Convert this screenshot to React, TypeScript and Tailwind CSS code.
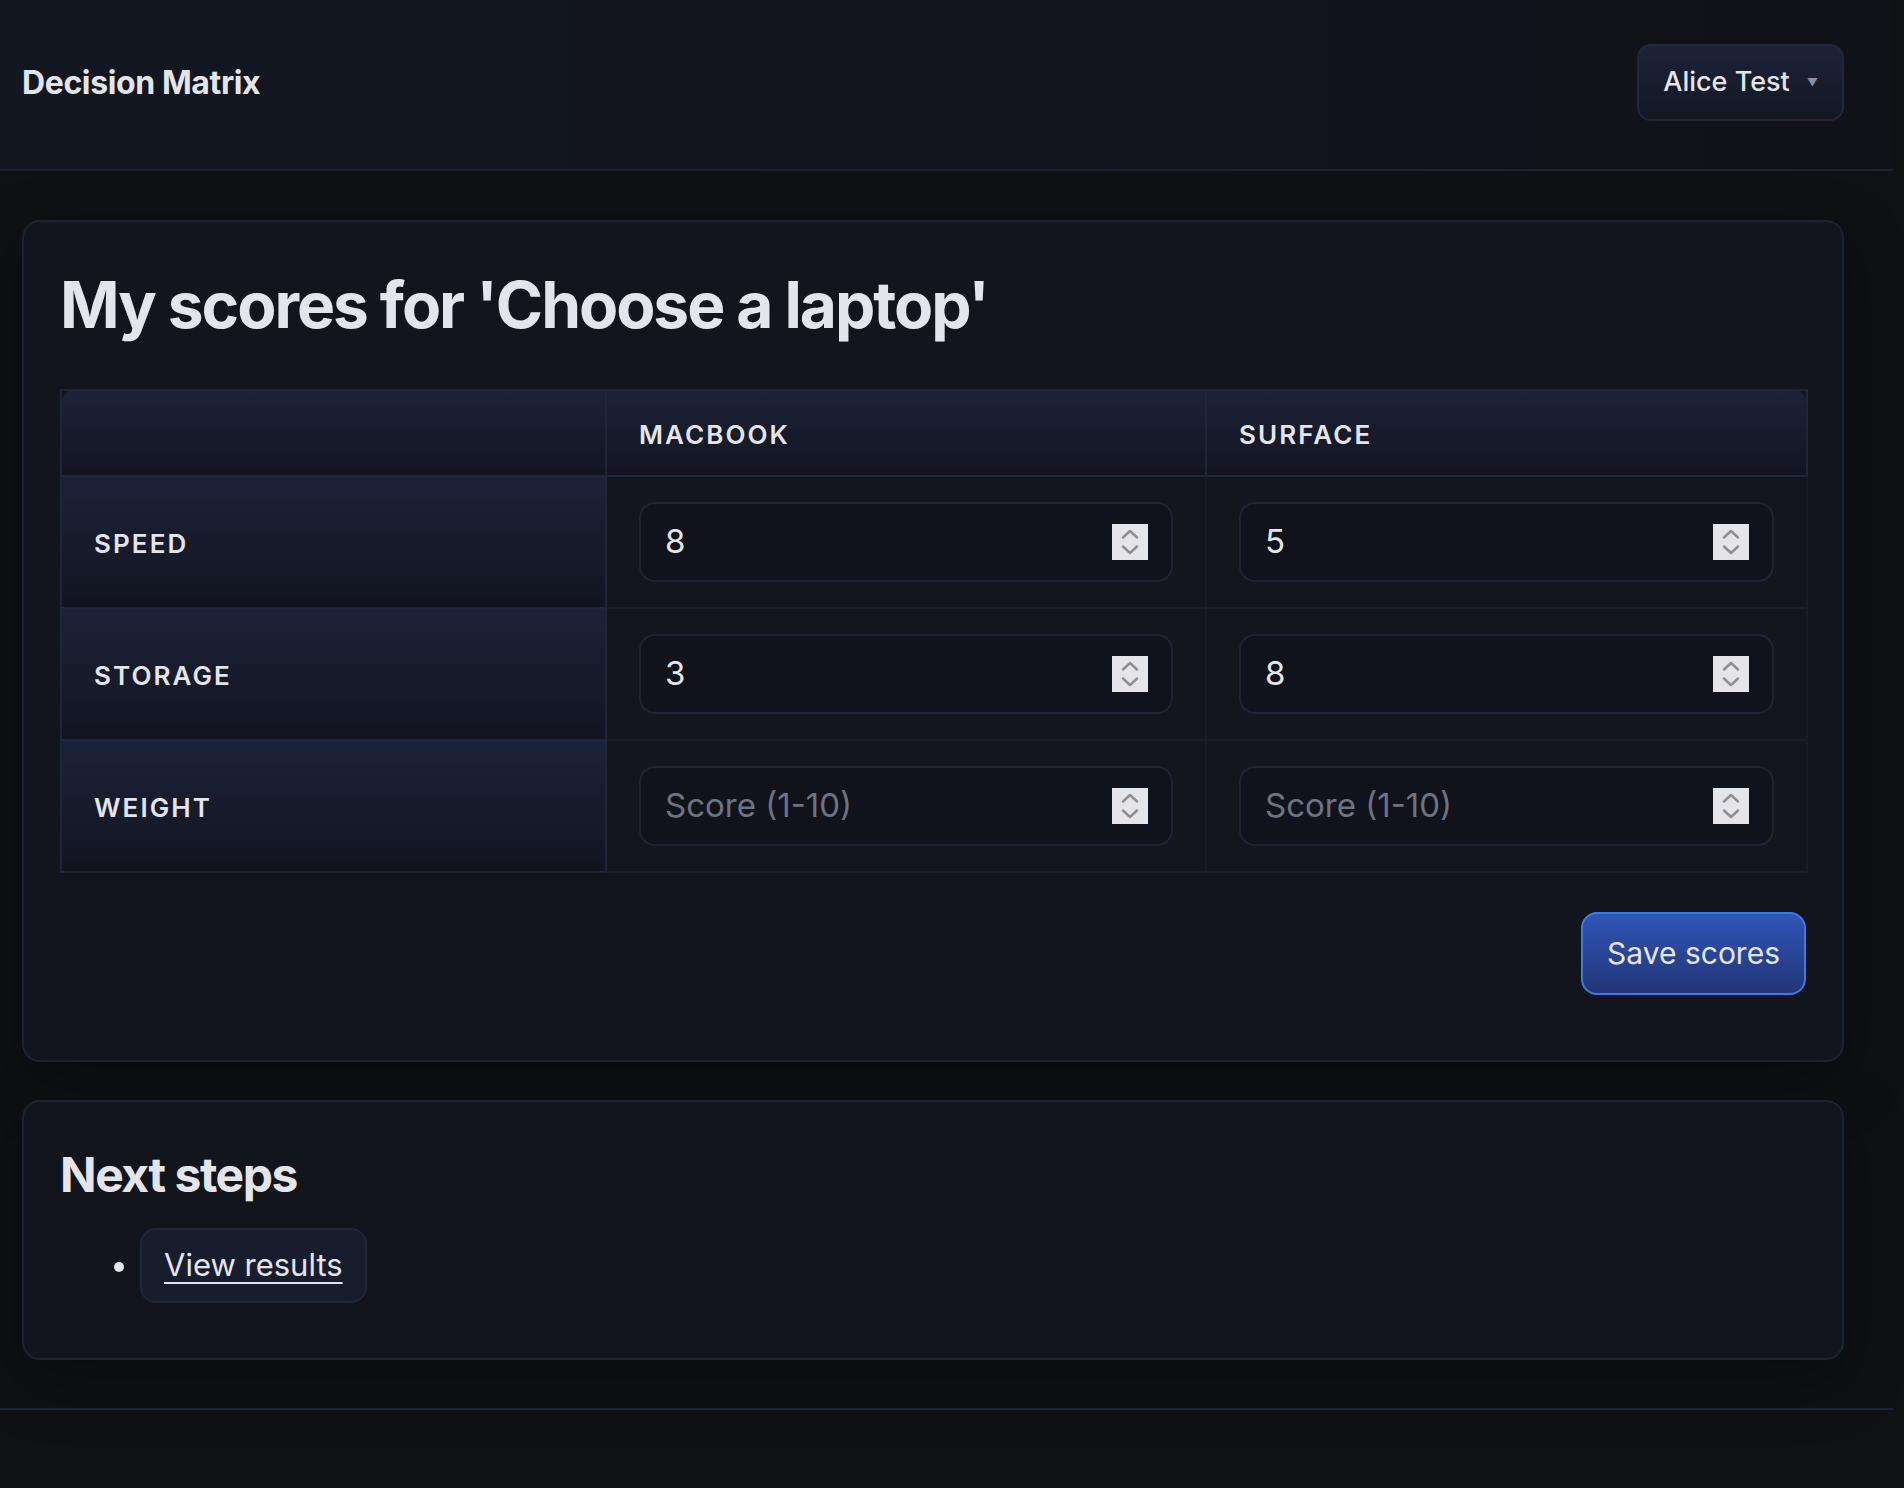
import { useState } from "react";

const options = ["MacBook", "Surface"];

const criteria = [
  { name: "Speed", scores: ["8", "5"] },
  { name: "Storage", scores: ["3", "8"] },
  { name: "Weight", scores: ["", ""] },
];

// petit spinner clair comme celui du navigateur
function Spinner() {
  return (
    <svg width="36" height="36" viewBox="0 0 36 36" className="shrink-0">
      <rect width="36" height="36" fill="#e4e4e9" />
      <path
        d="M11 13.5 L18 7 L25 13.5"
        stroke="#8e8e96"
        strokeWidth="2.5"
        fill="none"
        strokeLinecap="round"
        strokeLinejoin="round"
      />
      <path
        d="M11 22.5 L18 29 L25 22.5"
        stroke="#8e8e96"
        strokeWidth="2.5"
        fill="none"
        strokeLinecap="round"
        strokeLinejoin="round"
      />
    </svg>
  );
}

function ScoreInput({ value }: { value: string }) {
  const [v, setV] = useState(value);
  return (
    <div className="flex h-[80px] items-center rounded-[16px] border-2 border-[#1f2433] bg-[#10131b] pl-[24px] pr-[23px]">
      <input
        type="text"
        inputMode="numeric"
        value={v}
        onChange={(e) => setV(e.target.value)}
        placeholder="Score (1-10)"
        className="min-w-0 flex-1 bg-transparent text-[33px] text-[#e4e5ea] outline-none placeholder:text-[#6e7382]"
      />
      <Spinner />
    </div>
  );
}

export default function App() {
  return (
    <div className="min-h-[1488px] bg-[#0f1115] font-[Inter,sans-serif] text-[#e4e5ea]">
      <div className="w-[1893px]">
        {/* Barre du haut */}
        <header className="flex h-[171px] items-center justify-between border-b-2 border-[#1d2230] bg-gradient-to-r from-[#131722] to-[#101217] pb-[4px] pl-[22px] pr-[49px]">
          <span className="text-[32px] font-bold tracking-[-0.012em]">Decision Matrix</span>
          <button className="flex h-[77px] items-center gap-[17px] rounded-[14px] border-2 border-[#222838] bg-gradient-to-b from-[#1c2239] to-[#141824] pl-[24px] pr-[24px] text-[27px] font-medium">
            Alice Test
            <span className="text-[11px] text-[#8b90a0]">▼</span>
          </button>
        </header>

        <main className="pl-[22px] pr-[49px] pt-[49px]">
          {/* Scores */}
          <section className="rounded-[18px] border-2 border-[#1e2331] bg-[#12151c] px-[36px] pb-[65px] pt-[45px] shadow-[0_20px_60px_rgba(0,0,0,0.35)]">
            <h1 className="mb-[45px] text-[64px] font-bold leading-[1.2] tracking-[-0.032em]">
              My scores for 'Choose a laptop'
            </h1>

            <table className="w-[1746px] table-fixed border-collapse border-2 border-[#1f2534]">
              <colgroup>
                <col className="w-[545px]" />
                <col className="w-[600px]" />
                <col className="w-[601px]" />
              </colgroup>
              <thead>
                <tr className="h-[86px] bg-gradient-to-b from-[#1c2239] to-[#121520]">
                  <th className="rounded-tl-[14px] border-b-2 border-r-2 border-[#20263a]"></th>
                  {options.map((o, i) => (
                    <th
                      key={o}
                      className={
                        "border-b-2 border-r-2 border-[#20263a] px-[32px] pt-[4px] text-left text-[26px] font-semibold uppercase tracking-[0.08em]" +
                        (i === options.length - 1 ? " rounded-tr-[14px]" : "")
                      }
                    >
                      {o}
                    </th>
                  ))}
                </tr>
              </thead>
              <tbody>
                {criteria.map((c) => (
                  <tr key={c.name} className="border-b-2 border-[#1a1e29]">
                    <th className="border-b-2 border-r-2 border-[#20263a] bg-gradient-to-b from-[#1c2239] to-[#121520] px-[32px] pt-[4px] text-left text-[26px] font-semibold uppercase tracking-[0.08em]">
                      {c.name}
                    </th>
                    {c.scores.map((s, i) => (
                      <td
                        key={i}
                        className="border-r-2 border-[#181c26] bg-[#13161d] px-[32px] py-[25px]"
                      >
                        <ScoreInput value={s} />
                      </td>
                    ))}
                  </tr>
                ))}
              </tbody>
            </table>

            <div className="mt-[39px] flex justify-end">
              <button className="h-[83px] rounded-[16px] border-2 border-[#3b7be8] bg-gradient-to-b from-[#2f55b9] to-[#233676] px-[24px] text-[30px]">
                Save scores
              </button>
            </div>
          </section>

          {/* Étapes suivantes */}
          <section className="mt-[38px] rounded-[18px] border-2 border-[#1e2331] bg-[#12151c] px-[36px] pb-[55px] pt-[44px] shadow-[0_20px_60px_rgba(0,0,0,0.35)]">
            <h2 className="text-[48px] font-bold leading-[1.2] tracking-[-0.03em]">Next steps</h2>
            <ul className="mt-[25px] list-disc pl-[80px] text-[30px]">
              <li>
                <a
                  href="#"
                  className="inline-block rounded-[16px] border-2 border-[#212738] bg-[#181d2e] px-[22px] py-[13px] text-[31px] leading-[1.45] underline decoration-2 underline-offset-[6px]"
                >
                  View results
                </a>
              </li>
            </ul>
          </section>
        </main>

        <footer className="mt-[48px] border-t-2 border-[#1d2230]"></footer>
      </div>
    </div>
  );
}
